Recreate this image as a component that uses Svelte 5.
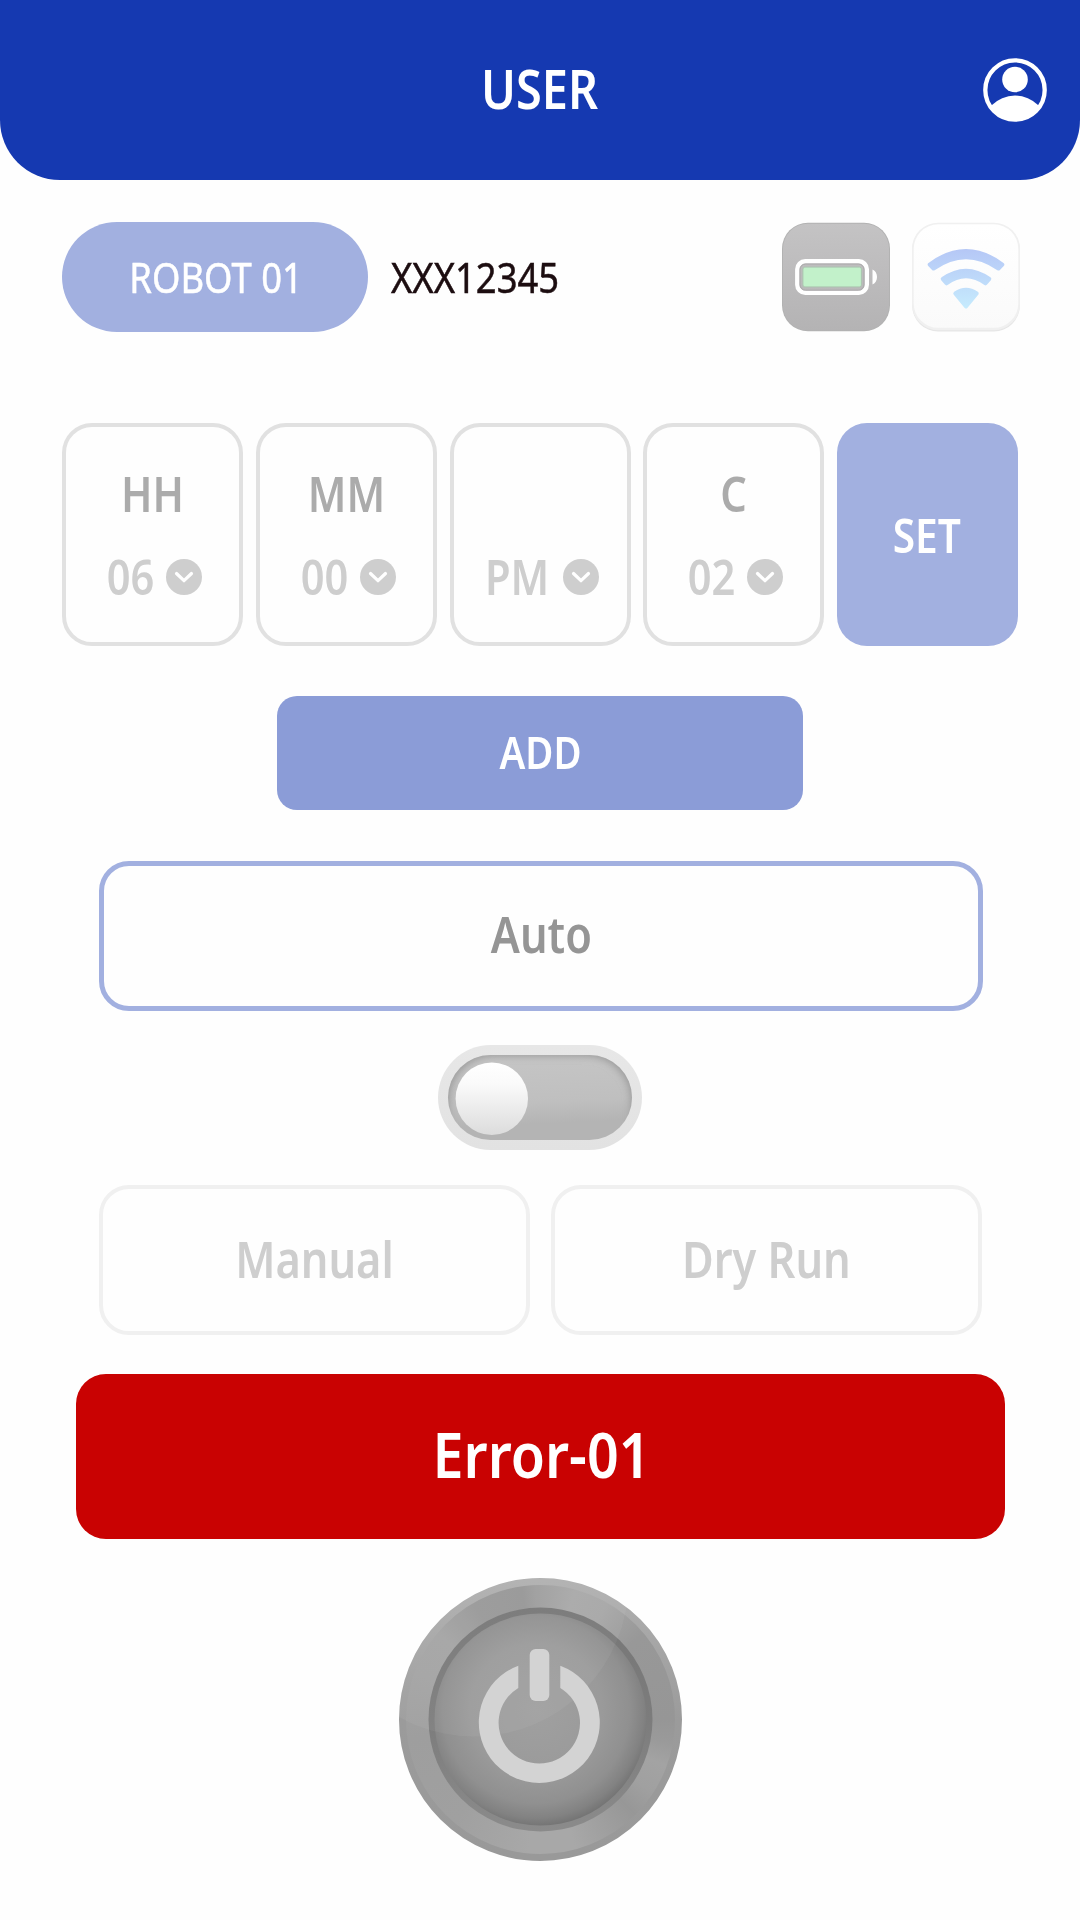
<script>
  const fields = [
    { label: 'HH', value: '06', kind: 'num' },
    { label: 'MM', value: '00', kind: 'num' },
    { label: '', value: 'PM', kind: 'half' },
    { label: 'C', value: '02', kind: 'num' }
  ];
</script>

<main class="screen">
  <header class="header">
    <h1 class="narrow">USER</h1>
    <svg class="profile" viewBox="0 0 64 64">
      <defs><clipPath id="disc"><circle cx="32" cy="32" r="31" /></clipPath></defs>
      <circle cx="32" cy="32" r="29.7" fill="none" stroke="#fff" stroke-width="4.3" />
      <circle cx="32" cy="21.5" r="12.8" fill="#fff" />
      <circle cx="32" cy="71" r="33.4" fill="#fff" clip-path="url(#disc)" />
    </svg>
  </header>

  <section class="status">
    <div class="pill"><span class="narrow">ROBOT 01</span></div>
    <span class="serial narrow">XXX12345</span>
    <svg class="tile" viewBox="0 0 108 110">
      <defs>
        <linearGradient id="bat" x1="0" y1="0" x2="0" y2="1">
          <stop offset="0" stop-color="#c4c3c4" /><stop offset="1" stop-color="#b4b3b4" />
        </linearGradient>
      </defs>
      <rect x="0" y="0.7" width="108" height="108.6" rx="26" fill="#b2b2b2" />
      <rect x="1" y="1.7" width="106" height="106.6" rx="25" fill="url(#bat)" />
      <rect x="15.3" y="39.3" width="69.5" height="31.5" rx="8" fill="none" stroke="#fff" stroke-width="4.4" />
      <rect x="18" y="42" width="64" height="26.2" rx="5.5" fill="none" stroke="#aaa9aa" stroke-width="1" />
      <rect x="20.9" y="45.1" width="58.5" height="19.8" rx="2" fill="#c2f1ca" stroke="#acc4b0" stroke-width="1" />
      <path d="M90.5 47.5c6 2.5 6 12.5 0 15z" fill="#fff" />
    </svg>
    <svg class="tile wifi" viewBox="0 0 108 110">
      <defs>
        <linearGradient id="sig" gradientUnits="userSpaceOnUse" x1="0" y1="27" x2="0" y2="86">
          <stop offset="0" stop-color="#b5c7f6" /><stop offset="1" stop-color="#c6ebfd" />
        </linearGradient>
        <linearGradient id="card" x1="0" y1="0" x2="0" y2="1">
          <stop offset="0" stop-color="#fff" /><stop offset="1" stop-color="#fafafa" />
        </linearGradient>
      </defs>
      <rect x="0.2" y="1.5" width="107.6" height="108" rx="26" fill="#e6e6e6" />
      <rect x="0" y="0.7" width="108" height="107.5" rx="26" fill="#f0f0f0" />
      <rect x="1.7" y="2.3" width="104.6" height="103.5" rx="24.5" fill="url(#card)" />
      <g fill="url(#sig)" stroke="url(#sig)" stroke-width="4" stroke-linejoin="round">
        <path d="M17.7 42.5Q54 15.5 90.3 42.5L86.5 46.5Q54 23.7 21.5 46.5Z" />
        <path d="M30.7 57Q54 40.5 77.3 57L73.6 61.3Q54 47 34.4 61.3Z" />
        <path d="M43.3 71.5Q54 64 64.7 71.5L54 84.5Z" />
      </g>
    </svg>
  </section>

  <section class="schedule">
    {#each fields as f}
      <div class="field">
        <div class="label narrow">{f.label}</div>
        <div class="value {f.kind}">
          <span class="narrow">{f.value}</span>
          <svg viewBox="0 0 36 36">
            <circle cx="18" cy="18" r="18" fill="#cecece" />
            <path d="M10.5 14.5 18 21.7 25.5 14.5" fill="none" stroke="#fff" stroke-width="3.2" stroke-linecap="round" stroke-linejoin="round" />
          </svg>
        </div>
      </div>
    {/each}
    <div class="set"><span class="narrow">SET</span></div>
  </section>

  <div class="add"><span class="narrow">ADD</span></div>
  <div class="auto"><span class="narrow">Auto</span></div>

  <svg class="toggle" viewBox="0 0 204 105">
    <defs>
      <linearGradient id="rim" x1="0" y1="0" x2="0" y2="1">
        <stop offset="0" stop-color="#e7e7e7" /><stop offset="1" stop-color="#e2e2e2" />
      </linearGradient>
      <linearGradient id="track" x1="0" y1="0" x2="0.1" y2="1">
        <stop offset="0" stop-color="#c6c6c6" /><stop offset="0.6" stop-color="#bfbfbf" /><stop offset="0.85" stop-color="#b4b4b4" /><stop offset="1" stop-color="#b4b4b4" />
      </linearGradient>
      <linearGradient id="knob" x1="0" y1="0" x2="0" y2="1">
        <stop offset="0" stop-color="#fff" /><stop offset="0.3" stop-color="#fafafa" /><stop offset="1" stop-color="#dcdcdc" />
      </linearGradient>
      <clipPath id="trackclip"><rect x="10" y="10" width="184" height="85" rx="42.5" /></clipPath>
      <filter id="soft" x="-20%" y="-20%" width="140%" height="140%"><feGaussianBlur stdDeviation="4" /></filter>
    </defs>
    <rect width="204" height="105" rx="52.5" fill="url(#rim)" />
    <rect x="10" y="10" width="184" height="85" rx="42.5" fill="url(#track)" />
    <g clip-path="url(#trackclip)">
      <rect x="6" y="6" width="192" height="120" rx="50" fill="none" stroke="#8f8f8f" stroke-width="8" filter="url(#soft)" />
    </g>
    <circle cx="53.8" cy="53.7" r="36.2" fill="url(#knob)" />
  </svg>

  <section class="modes">
    <div><span class="narrow">Manual</span></div>
    <div><span class="narrow">Dry Run</span></div>
  </section>

  <div class="error"><span class="narrow">Error-01</span></div>

  <div class="power">
    <div class="metal"></div>
    <svg viewBox="0 0 284 284">
      <defs>
        <linearGradient id="edge" x1="0" y1="0" x2="0" y2="1">
          <stop offset="0" stop-color="#afafaf" /><stop offset="0.5" stop-color="#9b9b9b" /><stop offset="1" stop-color="#999" />
        </linearGradient>
        <linearGradient id="bezel" x1="0" y1="0" x2="0" y2="1">
          <stop offset="0" stop-color="#777" /><stop offset="0.5" stop-color="#7c7c7c" /><stop offset="1" stop-color="#8b8b8b" />
        </linearGradient>
        <radialGradient id="face" gradientUnits="userSpaceOnUse" cx="138" cy="133" r="120">
          <stop offset="0" stop-color="#a0a0a0" /><stop offset="0.55" stop-color="#9a9a9a" /><stop offset="0.78" stop-color="#909090" />
          <stop offset="0.9" stop-color="#828282" /><stop offset="1" stop-color="#6e6e6e" />
        </radialGradient>
        <clipPath id="all"><circle cx="142.5" cy="142.5" r="141.5" /></clipPath>
      </defs>
      <circle cx="142.5" cy="142.5" r="138" fill="none" stroke="url(#edge)" stroke-width="7" />
      <circle cx="142.5" cy="142.5" r="112" fill="url(#bezel)" />
      <circle cx="142.5" cy="142.5" r="106" fill="url(#face)" />
      <circle cx="76" cy="5" r="154.5" fill="#fff" opacity="0.05" clip-path="url(#all)" />
      <path d="M120.3 88.7A60.5 60.5 0 1 0 162.3 88.7V111A40.7 40.7 0 1 1 120.3 111Z" fill="#d3d3d3" />
      <rect x="131.7" y="72" width="19.6" height="52" rx="6" fill="#d3d3d3" />
    </svg>
  </div>
</main>

<style>
  :global(body) { margin: 0; background: #fff; }
  * { box-sizing: border-box; }
  .screen {
    width: 1080px; height: 1920px; overflow: hidden; background: #fefefe;
    display: flex; flex-direction: column; align-items: center;
    font-family: 'Noto Sans', sans-serif; font-weight: 600; color: #fff; line-height: 1;
  }
  /* semi-condensed lettering */
  .narrow { transform: scaleX(0.867); white-space: nowrap; }
  .header {
    width: 100%; height: 180px; flex: none; background: #1539b1; border-radius: 0 0 60px 60px;
    display: grid; grid-template-columns: 1fr auto 1fr; align-items: center; padding: 0 33px;
  }
  h1 { grid-column: 2; margin: 0; font-size: 54px; font-weight: 600; padding: 0 2px 4px 0; }
  .profile { width: 64px; height: 64px; justify-self: end; }
  .status { width: 956px; height: 110px; margin-top: 42px; display: flex; align-items: center; flex: none; font-size: 42px; font-weight: 400; }
  .status .narrow { -webkit-text-stroke: 0.5px currentColor; }
  .pill { width: 306px; height: 110px; border-radius: 55px; background: #a2b0e0; display: flex; align-items: center; justify-content: center; padding-left: 3px; }
  .serial { margin-left: 23px; flex: 1; color: #1c0d10; transform-origin: left center; }
  .tile { width: 108px; height: 110px; flex: none; }
  .wifi { margin-left: 22px; margin-right: -2px; }
  .schedule { width: 956px; height: 223px; margin-top: 91px; flex: none; display: grid; grid-template-columns: repeat(5, 181px); justify-content: space-between; font-size: 48px; }
  .field { border: 4px solid #e1e1e1; border-radius: 30px; display: flex; flex-direction: column; padding-top: 40px; color: #ababab; }
  .label { height: 54px; line-height: 54px; text-align: center; }
  .value { margin-top: 29px; height: 54px; display: flex; align-items: center; justify-content: center; gap: 8px; color: #cecece; }
  .half { gap: 8px; padding-right: 1px; }
  .value svg { width: 36px; height: 36px; }
  .set { border-radius: 30px; background: #a2b0e0; display: flex; align-items: center; justify-content: center; font-size: 47.5px; padding-right: 2px; }
  .set .narrow { transform: scaleX(0.855); }
  .add { width: 526px; height: 114px; margin-top: 50px; flex: none; border-radius: 20px; background: #8b9cd7; display: flex; align-items: center; justify-content: center; font-size: 45.5px; padding: 0 0 2px 2px; }
  .add .narrow { transform: scaleX(0.845); }
  .auto { width: 884px; height: 150px; margin-top: 51px; margin-left: 2px; flex: none; border: 5px solid #a2b0e0; border-radius: 30px; color: #959595; display: flex; align-items: center; justify-content: center; font-size: 50px; padding-bottom: 4px; }
  .toggle { width: 204px; height: 105px; margin-top: 34px; flex: none; }
  .modes { width: 883px; height: 150px; margin: 35px 0 0 1px; flex: none; display: flex; justify-content: space-between; font-size: 50px; color: #cecece; }
  .modes div { width: 431px; border: 4px solid #f0f0f0; border-radius: 30px; display: flex; align-items: center; justify-content: center; padding: 0 1px 3px 0; }
  .error { width: 929px; height: 165px; margin: 39px 0 0 1px; flex: none; border-radius: 30px; background: #c90202; display: flex; align-items: center; justify-content: center; font-size: 63px; padding: 0 0 6px 3px; }
  .error .narrow { transform: scaleX(0.882); }
  .power { width: 284px; height: 284px; margin: 38px 0 0; flex: none; display: grid; }
  .power > * { grid-area: 1 / 1; }
  .power svg { width: 284px; height: 284px; z-index: 1; }
  .metal {
    width: 275px; height: 275px; margin: 5px; border-radius: 50%;
    background: conic-gradient(#9f9f9f 0deg, #a8a8a8 15deg, #a6a6a6 30deg, #989898 50deg, #969696 90deg, #9a9a9a 100deg, #a3a3a3 110deg, #a0a0a0 123deg, #979797 135deg, #a8a8a8 165deg, #a8a8a8 185deg, #a0a0a0 220deg, #9e9e9e 262deg, #a3a3a3 290deg, #a4a4a4 310deg, #989898 330deg, #969696 352deg, #9f9f9f 360deg);
  }
</style>
